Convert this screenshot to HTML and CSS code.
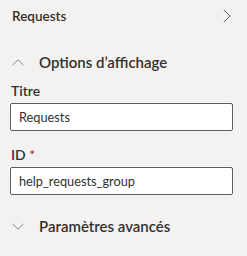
FILE: index.html
```html
<!DOCTYPE html>
<html lang="fr">
<head>
    <meta charset="UTF-8">
    <title>Requests</title>
    <link rel="stylesheet" href="styles.css">
</head>
<body>
    <div class="panel">
        <div class="panel-header">
            <span class="panel-title">Requests</span>
            <svg class="chevron-right" width="8" height="14" viewBox="0 0 8 14">
                <path d="M0.8 0.8 L7 7 L0.8 13.2" fill="none" stroke="#605e5c" stroke-width="1"/>
            </svg>
        </div>

        <div class="section-toggle">
            <span class="toggle-icon">
                <svg width="12" height="7" viewBox="0 0 12 7">
                    <path d="M0.6 6 L6 0.8 L11.4 6" fill="none" stroke="#8a8886" stroke-width="1"/>
                </svg>
            </span>
            <span class="section-title">Options d’affichage</span>
        </div>

        <div class="form-group first">
            <label for="titre">Titre</label>
            <input type="text" id="titre" value="Requests">
        </div>

        <div class="form-group">
            <label for="groupId">ID <span class="required">*</span></label>
            <input type="text" id="groupId" value="help_requests_group">
        </div>

        <div class="section-toggle last">
            <span class="toggle-icon">
                <svg width="12" height="7" viewBox="0 0 12 7">
                    <path d="M0.6 1 L6 6.2 L11.4 1" fill="none" stroke="#8a8886" stroke-width="1"/>
                </svg>
            </span>
            <span class="section-title">Paramètres avancés</span>
        </div>
    </div>
</body>
</html>
```

FILE: styles.css
```css
body {
    margin: 0;
    background: #f3f2f1;
    font-family: Lato, sans-serif;
    color: #323130;
}

.panel {
    width: 247px;
    height: 256px;
}

.panel-header {
    height: 32px;
    display: flex;
    align-items: center;
    justify-content: space-between;
    padding: 0 16px 0 12px;
}

.panel-title {
    font-size: 13.5px;
    font-weight: 600;
}

.chevron-right {
    display: block;
}

.section-toggle {
    height: 28px;
    display: flex;
    align-items: center;
    margin-top: 16px;
    padding-left: 12px;
}

.section-toggle.last {
    margin-top: 17px;
}

.toggle-icon {
    width: 27px;
    display: flex;
}

.section-title {
    font-size: 15px;
    font-weight: 600;
}

.form-group {
    padding: 0 14px 0 10px;
    margin-top: 14px;
}

.form-group.first {
    margin-top: 5px;
}

label {
    display: block;
    height: 20px;
    line-height: 20px;
    font-size: 14px;
    font-weight: 600;
    padding-left: 1px;
    margin-bottom: 2px;
}

.required {
    color: #a4262c;
    font-weight: 400;
}

input {
    display: block;
    width: 100%;
    height: 28px;
    box-sizing: border-box;
    border: 1px solid #605e5c;
    border-radius: 2px;
    background: #ffffff;
    padding: 0 8px;
    font-family: Lato, sans-serif;
    font-size: 12.75px;
    color: #323130;
    outline: none;
}
```
